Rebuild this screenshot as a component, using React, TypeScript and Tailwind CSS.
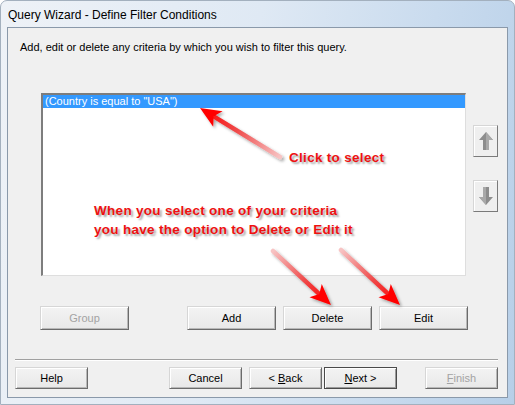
import React from 'react'

const ui = { fontFamily: '"Liberation Sans", Arial, sans-serif' }

function Btn({
  label,
  w,
  h = 24,
  disabled,
  isDefault,
  ul,
}: {
  label: string
  w: number
  h?: number
  disabled?: boolean
  isDefault?: boolean
  ul?: number
}) {
  const text =
    ul === undefined ? (
      label
    ) : (
      <>
        {label.slice(0, ul)}
        <span className="underline underline-offset-1">{label[ul]}</span>
        {label.slice(ul + 1)}
      </>
    )
  return (
    <div
      style={{ width: w, height: h }}
      className={
        'flex items-center justify-center text-[11px] bg-[linear-gradient(#f3f3f3,#e8e8e8)] ' +
        (isDefault
          ? 'border border-[#4a4a4a] shadow-[inset_1px_1px_0_#ffffff,inset_-1px_-1px_0_#9a9a9a] '
          : 'border border-t-[#d6d6d6] border-l-[#d6d6d6] border-r-[#6b6b6b] border-b-[#6b6b6b] shadow-[inset_1px_1px_0_#ffffff,inset_-1px_-1px_0_#b8b8b8] ') +
        (disabled ? 'text-[#a3a3a3]' : 'text-black')
      }
    >
      <span className="whitespace-pre">{text}</span>
    </div>
  )
}

function MoveBtn({ down }: { down?: boolean }) {
  return (
    <div className="w-[25px] h-[32px] flex items-center justify-center bg-[#efefef] border border-t-[#d6d6d6] border-l-[#d6d6d6] border-r-[#7a7a7a] border-b-[#7a7a7a] shadow-[inset_1px_1px_0_#ffffff]">
      <svg width="16" height="20" viewBox="0 0 16 20" className={down ? 'rotate-180' : ''}>
        <path d="M8 1 L15 9 L11 9 L11 19 L5 19 L5 9 L1 9 Z" fill="#8d8d8d" />
        <path d="M8 1 L15 9 L11 9 L11 19 L8 19 Z" fill="#a9a9a9" />
      </svg>
    </div>
  )
}

function Arrow({ id, x1, y1, x2, y2 }: { id: string; x1: number; y1: number; x2: number; y2: number }) {
  const dx = x2 - x1
  const dy = y2 - y1
  const len = Math.hypot(dx, dy)
  const ux = dx / len
  const uy = dy / len
  const hl = 21
  const hw = 9
  const bx = x2 - ux * hl
  const by = y2 - uy * hl
  const pts = `${x2},${y2} ${bx - uy * hw},${by + ux * hw} ${bx + ux * 5},${by + uy * 5} ${bx + uy * hw},${by - ux * hw}`
  return (
    <g filter="url(#shadow)">
      <defs>
        <linearGradient id={id} gradientUnits="userSpaceOnUse" x1={x1} y1={y1} x2={x2} y2={y2}>
          <stop offset="0" stopColor="#f7c4c4" />
          <stop offset="0.55" stopColor="#ef4848" />
          <stop offset="1" stopColor="#ff0000" />
        </linearGradient>
      </defs>
      <line x1={x1} y1={y1} x2={bx + ux * 4} y2={by + uy * 4} stroke={`url(#${id})`} strokeWidth="4.5" strokeLinecap="round" />
      <polygon points={pts} fill="#ff0000" />
    </g>
  )
}

export default function App() {
  return (
    <div
      style={ui}
      className="relative w-[515px] h-[405px] flex flex-col overflow-hidden rounded-t-[7px] border border-[#a3b0be] bg-[linear-gradient(100deg,#eef2f7_0%,#dfe9f4_45%,#c9dbee_75%,#b7cfe8_100%)]"
    >
      <div className="h-[26px] pl-[7px] pt-[1px] flex items-center text-[12px] text-black">
        Query Wizard - Define Filter Conditions
      </div>

      <div className="flex-1 mx-[6px] mb-[6px] bg-[#f0f0f0] border border-[#8a99aa] flex flex-col">
        <div className="mt-[12px] pl-[12px] text-[11px] leading-[14px] text-black">
          Add, edit or delete any criteria by which you wish to filter this query.
        </div>

        <div className="mt-[39px] pl-[33px] flex">
          <div className="w-[425px] h-[183px] bg-white border-t-2 border-l-2 border-t-[#7d7d7d] border-l-[#7d7d7d] border-b border-r border-b-[#dedede] border-r-[#dedede]">
            <div className="h-[13px] bg-[#3399ff] text-white text-[11px] leading-[13px] pl-[2px]">
              (Country is equal to "USA")
            </div>
          </div>
          <div className="ml-[7px] pt-[32px] flex flex-col gap-[23px]">
            <MoveBtn />
            <MoveBtn down />
          </div>
        </div>

        <div className="mt-[30px] pl-[32px] flex">
          <Btn label="Group" w={89} disabled />
          <div className="ml-[58px] flex gap-[7px]">
            <Btn label="Add" w={89} />
            <Btn label="Delete" w={89} />
            <Btn label="Edit" w={89} />
          </div>
        </div>

        <div className="mt-[29px] ml-[7px] mr-[9px] border-t border-[#a0a0a0] border-b border-b-white" />

        <div className="mt-[6px] pl-[7px] pr-[9px] flex">
          <Btn label="Help" w={73} h={22} />
          <div className="ml-[81px] flex gap-[7px]">
            <Btn label="Cancel" w={73} h={22} />
            <div className="flex gap-[2px]">
              <Btn label="< Back" w={73} h={22} ul={2} />
              <Btn label="Next >" w={73} h={22} ul={0} isDefault />
            </div>
          </div>
          <div className="ml-auto">
            <Btn label="Finish" w={73} h={22} ul={0} disabled />
          </div>
        </div>
      </div>

      <svg className="absolute inset-0 pointer-events-none" width="515" height="405">
        <defs>
          <filter id="shadow" x="-20%" y="-20%" width="140%" height="140%">
            <feDropShadow dx="2" dy="2" stdDeviation="1.5" floodColor="#000" floodOpacity="0.35" />
          </filter>
        </defs>
        <Arrow id="a1" x1={279} y1={156} x2={199} y2={107} />
        <Arrow id="a2" x1={272} y1={250} x2={330} y2={304} />
        <Arrow id="a3" x1={340} y1={249} x2={399} y2={304} />
      </svg>

      <div className="absolute left-[288px] top-[147px] text-[13.5px] leading-[19px] tracking-[0.3px] font-bold text-[#ee1111] [text-shadow:2px_2px_2px_rgba(0,0,0,0.35)]">
        Click to select
      </div>
      <div className="absolute left-[93px] top-[200px] text-[13.5px] leading-[19px] tracking-[0.3px] font-bold text-[#ee1111] [text-shadow:2px_2px_2px_rgba(0,0,0,0.35)]">
        <div>When you select one of your criteria</div>
        <div>you have the option to Delete or Edit it</div>
      </div>
    </div>
  )
}
